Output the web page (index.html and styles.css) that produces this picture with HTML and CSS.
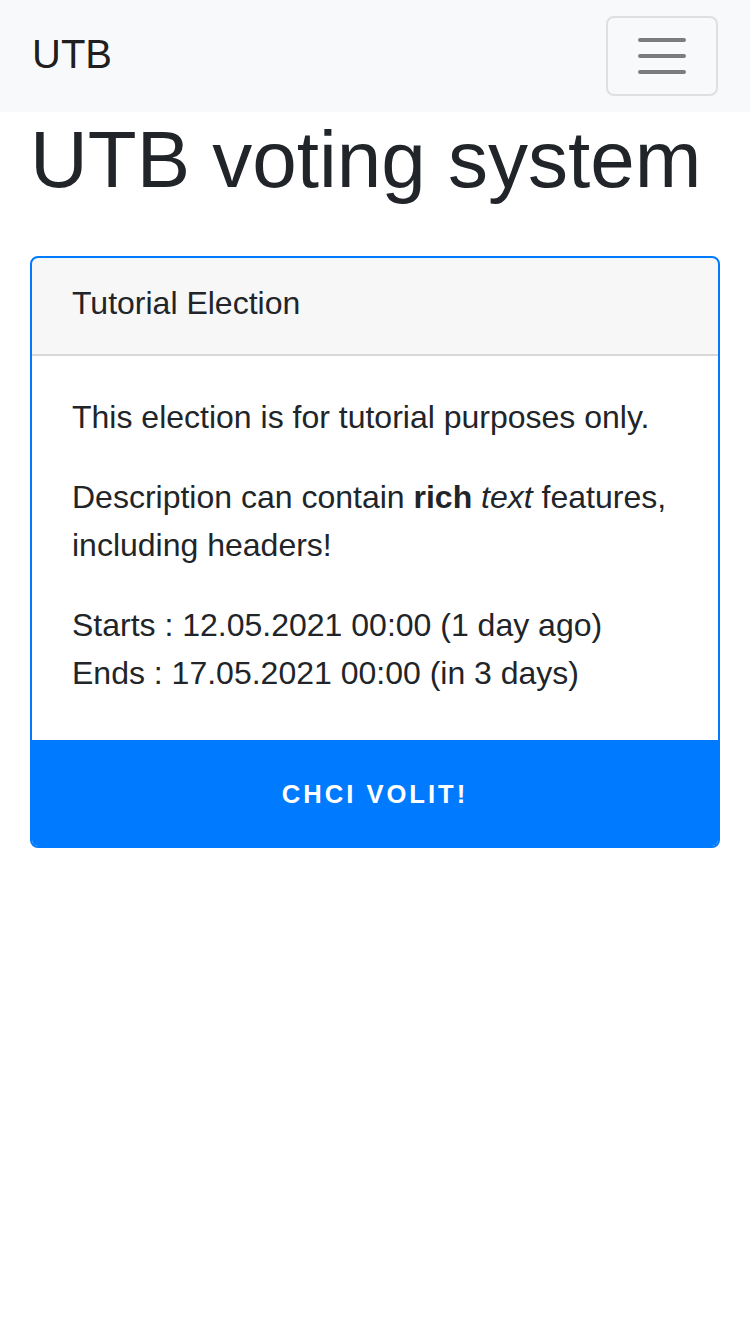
FILE: index.html
```html
<!DOCTYPE html>
<html lang="cs">
<head>
<meta charset="utf-8">
<title>UTB voting system</title>
<link rel="stylesheet" href="styles.css">
</head>
<body>
<nav class="navbar">
  <a class="brand" href="#">UTB</a>
  <button class="toggler" type="button" aria-label="Toggle navigation">
    <svg class="toggler-icon" viewBox="0 0 30 30" width="60" height="60" aria-hidden="true">
      <path d="M4 7h22M4 15h22M4 23h22" stroke="rgba(0,0,0,0.5)" stroke-width="2" stroke-linecap="round" stroke-miterlimit="10" fill="none"/>
    </svg>
  </button>
</nav>
<main class="container">
  <h1 class="title">UTB voting system</h1>
  <section class="card">
    <div class="card-header">Tutorial Election</div>
    <div class="card-body">
      <p>This election is for tutorial purposes only.</p>
      <p>Description can contain <strong>rich</strong> <em>text</em> features, including headers!</p>
      <p class="dates">Starts : 12.05.2021 00:00 (1 day ago)<br>Ends : 17.05.2021 00:00 (in 3 days)</p>
    </div>
    <a class="vote-btn" href="#">Chci volit!</a>
  </section>
</main>
</body>
</html>
```
FILE: styles.css
```css
* { box-sizing: border-box; }

html, body {
  margin: 0;
  padding: 0;
}

body {
  font-family: "Liberation Sans", Arial, Helvetica, sans-serif;
  font-size: 32px;
  line-height: 1.5;
  color: #212529;
  background: #fff;
}

.navbar {
  display: flex;
  align-items: center;
  justify-content: space-between;
  padding: 16px 32px;
  background: #f8f9fa;
}

.brand {
  font-size: 40px;
  line-height: 60px;
  padding: 8px 0 12px;
  color: rgba(0, 0, 0, 0.9);
  text-decoration: none;
}

.toggler {
  display: flex;
  align-items: center;
  justify-content: center;
  padding: 8px 24px;
  background: transparent;
  border: 2px solid rgba(0, 0, 0, 0.1);
  border-radius: 8px;
  line-height: 1;
  cursor: pointer;
}

.toggler-icon {
  display: block;
  width: 60px;
  height: 60px;
}

.container {
  padding: 0 30px;
}

.title {
  font-size: 80px;
  font-weight: 500;
  line-height: 1.2;
  margin: 0 0 48px;
}

.card {
  display: flex;
  flex-direction: column;
  border: 2px solid #007bff;
  border-radius: 8px;
  overflow: hidden;
}

.card-header {
  padding: 21px 40px 27px;
  background: rgba(0, 0, 0, 0.03);
  border-bottom: 2px solid rgba(0, 0, 0, 0.125);
  line-height: 48px;
}

.card-body {
  padding: 37px 40px 43px;
}

.card-body p {
  margin: 0 0 32px;
}

.card-body p.dates {
  margin-bottom: 0;
}

.vote-btn {
  display: block;
  margin: 0 -2px -2px;
  padding: 33px 0;
  border: 2px solid #007bff;
  background: #007bff;
  color: #fff;
  text-align: center;
  text-decoration: none;
  text-transform: uppercase;
  font-weight: 700;
  font-size: 25.6px;
  line-height: 1.5;
  letter-spacing: 3px;
}
```
